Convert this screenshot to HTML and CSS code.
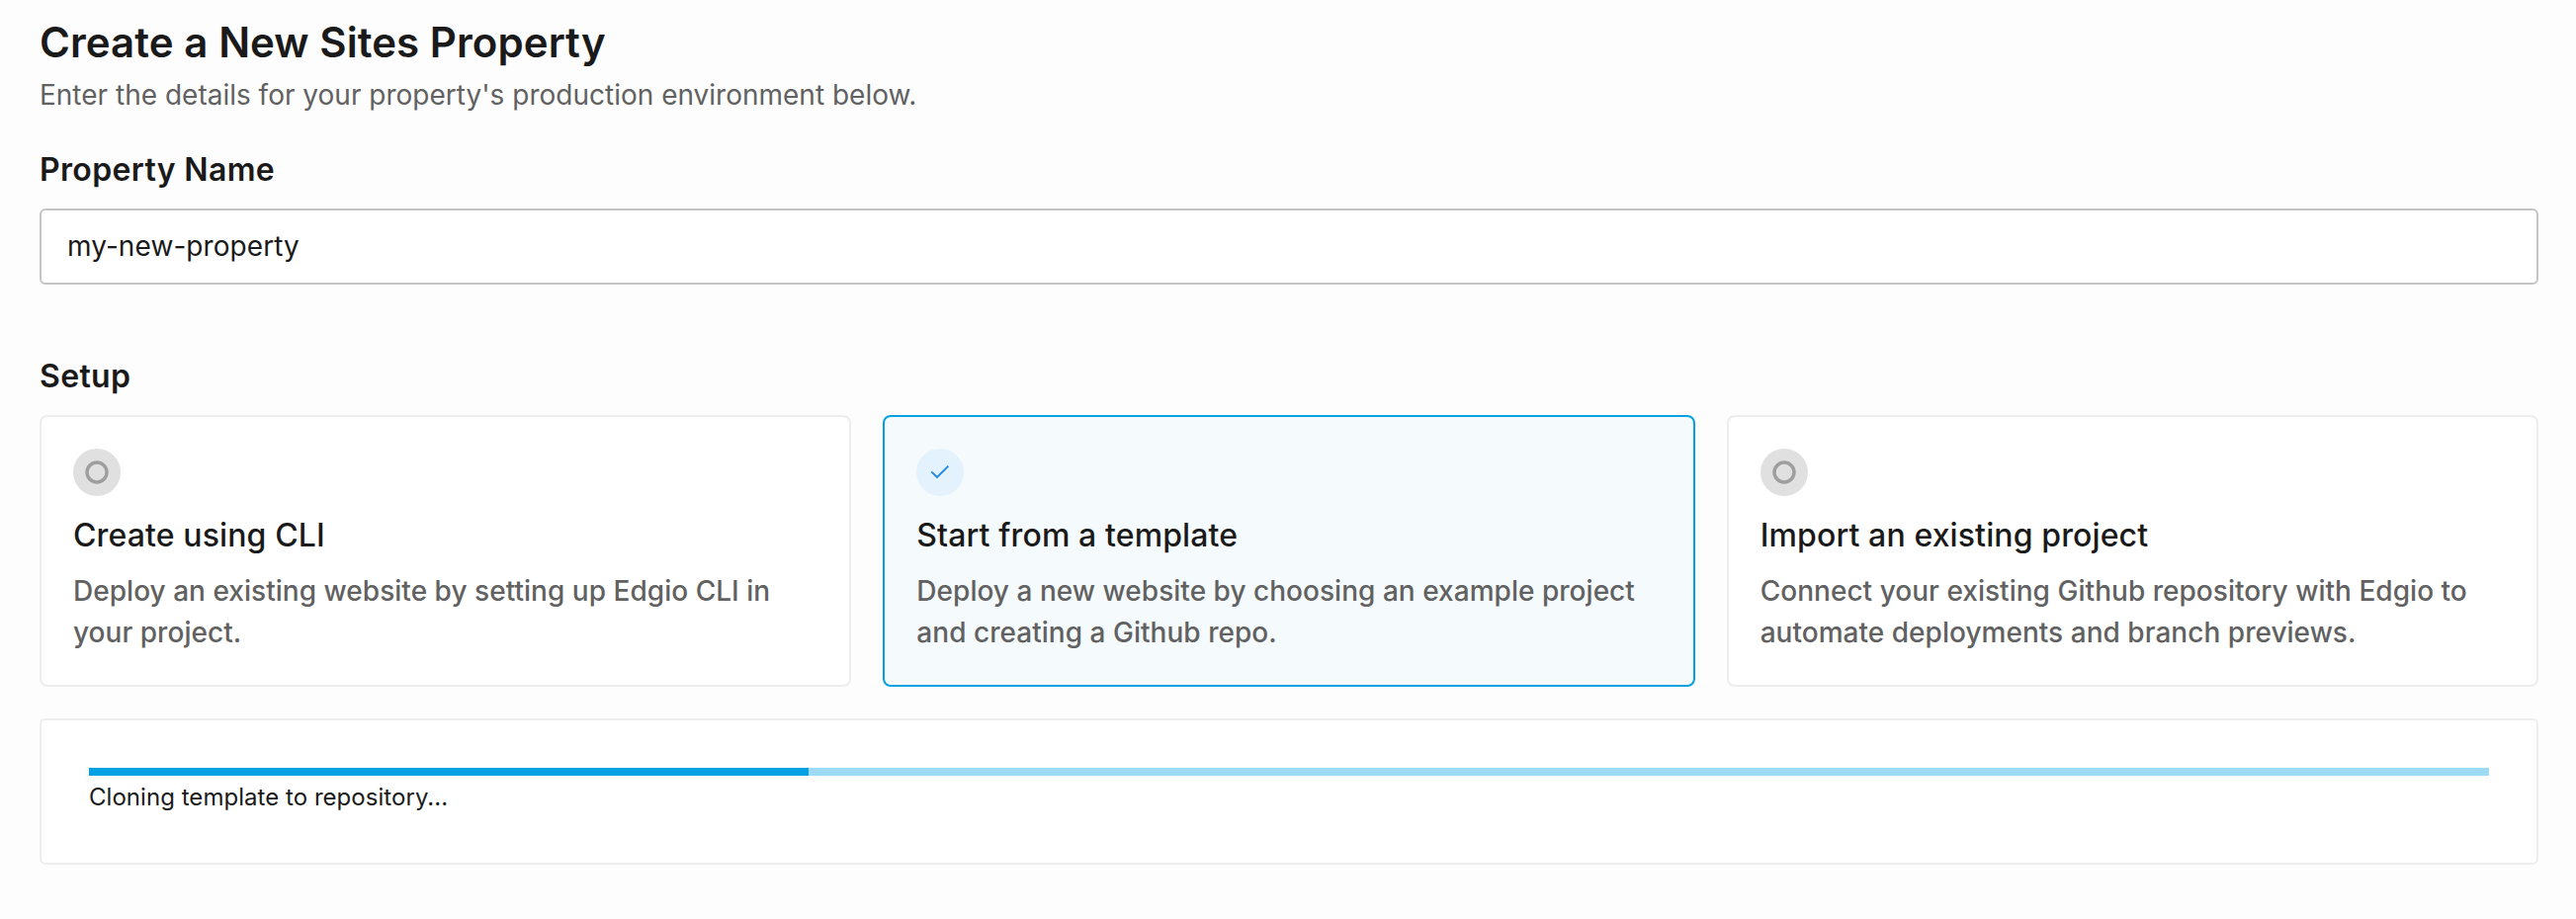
FILE: index.html
```html
<!DOCTYPE html>
<html lang="en">
<head>
<meta charset="utf-8">
<title>Create a New Sites Property</title>
<link rel="stylesheet" href="styles.css">
</head>
<body>
<main class="page">
  <h1 class="page-title"><span>Create a New Sites Property</span></h1>
  <p class="subtitle"><span>Enter the details for your property's production environment below.</span></p>
  <h2 class="section-title"><span>Property Name</span></h2>
  <div class="name-field"><span>my-new-property</span></div>
  <h2 class="section-title setup-title"><span>Setup</span></h2>
  <div class="options">
    <section class="card">
      <svg class="icon" viewBox="0 0 48 48"><circle cx="24" cy="24" r="24" fill="#e0e0e0"/><circle cx="24" cy="24" r="10" fill="none" stroke="#9e9e9e" stroke-width="3.4"/></svg>
      <h3 class="card-title"><span>Create using CLI</span></h3>
      <p class="card-text"><span>Deploy an existing website by setting up Edgio CLI in<br>your project.</span></p>
    </section>
    <section class="card selected">
      <svg class="icon" viewBox="0 0 48 48"><circle cx="24" cy="24" r="24" fill="#e3f2fd"/><path d="M15.3 23.3L21 29L32.4 17.6" fill="none" stroke="#1e88e5" stroke-width="1.9"/></svg>
      <h3 class="card-title"><span>Start from a template</span></h3>
      <p class="card-text"><span>Deploy a new website by choosing an example project<br>and creating a Github repo.</span></p>
    </section>
    <section class="card">
      <svg class="icon" viewBox="0 0 48 48"><circle cx="24" cy="24" r="24" fill="#e0e0e0"/><circle cx="24" cy="24" r="10" fill="none" stroke="#9e9e9e" stroke-width="3.4"/></svg>
      <h3 class="card-title"><span>Import an existing project</span></h3>
      <p class="card-text"><span>Connect your existing Github repository with Edgio to<br>automate deployments and branch previews.</span></p>
    </section>
  </div>
  <section class="progress-panel">
    <div class="track"><div class="fill" style="width:30%"></div></div>
    <p class="status"><span>Cloning template to repository...</span></p>
  </section>
</main>
</body>
</html>
```
FILE: styles.css
```css
* { box-sizing: border-box; }
body {
  margin: 0;
  background: #fdfdfd;
  color: #1a1a1a;
  font-family: Inter, sans-serif;
}
h1, h2, h3, p { margin: 0; }
.page {
  display: flex;
  flex-direction: column;
  height: 930px;
  padding: 11px 38px 0 40px;
}
.page-title { font-size: 42px; line-height: 64px; font-weight: 600; letter-spacing: 0.06px; }
.subtitle {
  font-size: 28px;
  line-height: 42px;
  color: #616161;
}
.section-title {
  margin-top: 31px;
  font-size: 32px;
  line-height: 48px;
  font-weight: 600;
  letter-spacing: 0.35px;
}
.name-field {
  height: 77px;
  margin-top: 15px;
  padding: 15px 26px;
  border: 2px solid #c4c4c4;
  border-radius: 6px;
  background: #fff;
  font-size: 28px;
  line-height: 42px;
  letter-spacing: 0.08px;
}
.setup-title { margin-top: 69px; }
.options {
  display: grid;
  grid-template-columns: repeat(3, 1fr);
  gap: 32px;
  margin-top: 15px;
}
.card {
  height: 275px;
  padding: 32px;
  border: 2px solid #ededed;
  border-radius: 8px;
  background: #fff;
}
.selected { border-color: #03a1e2; background: #f5fafd; }
.icon { display: block; width: 48px; height: 48px; }
.card-title {
  margin-top: 16px;
  font-size: 32px;
  line-height: 48px;
  font-weight: 500;
  letter-spacing: 0.12px;
}
.card-text {
  margin-top: 11px;
  font-size: 28px;
  line-height: 42px;
  font-weight: 500;
  letter-spacing: 0.03px;
  color: #616161;
  white-space: nowrap;
}
.progress-panel {
  height: 148px;
  margin-top: 32px;
  padding: 48px;
  border: 2px solid #ededed;
  border-radius: 6px;
  background: #fff;
}
.track { height: 8px; background: #9ddaf3; }
.fill { height: 100%; background: #03a1e2; }
.status { margin-top: 4px; font-size: 24px; line-height: 36px; letter-spacing: 0.04px; }
```
